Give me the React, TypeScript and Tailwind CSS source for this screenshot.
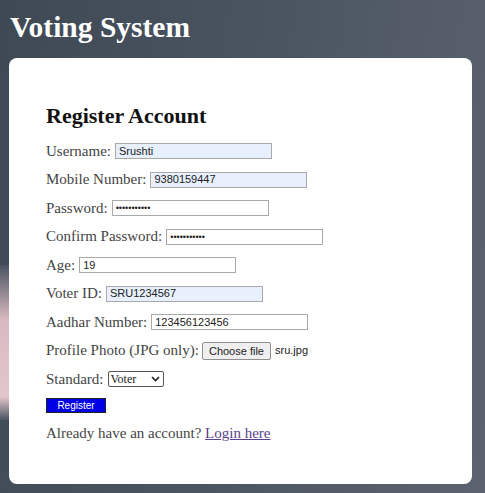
import React from 'react';

const serif = "font-['Liberation_Serif','Times_New_Roman',serif]";
const sans = "font-['Liberation_Sans',Arial,sans-serif]";

const Field = ({ label, value, type = 'text', filled = false }: { label: string; value: string; type?: string; filled?: boolean }) => (
  <div className="flex items-center h-[18px]">
    <span className="mr-[4px]">{label}</span>
    <input
      type={type}
      defaultValue={value}
      className={`h-[16px] w-[157px] border border-[#a9a9a9] px-[3px] text-[#222] ${sans} ${type === 'password' ? 'text-[9px]' : 'text-[11px]'} ${filled ? 'bg-[#e8f0fe]' : 'bg-white'}`}
    />
  </div>
);

export default function App() {
  return (
    <div className="relative h-[493px] w-[485px] overflow-hidden bg-[linear-gradient(100deg,#3e4954_0%,#4b5561_50%,#5c6370_100%)]">
      <div className="absolute left-0 top-[265px] h-[155px] w-[12px] bg-[linear-gradient(180deg,#4a5561_0%,#d8b9c0_35%,#e3c6cc_85%,#4a5561_100%)]" />
      <div className={`relative pl-[10px] pt-[11px] h-[58px] ${serif}`}>
        <h1 className="text-[29.5px] font-bold leading-[32px] text-white">Voting System</h1>
      </div>
      <div className={`relative mx-[9px] w-[463px] h-[426px] rounded-[8px] bg-white pl-[37px] pt-[45px] text-[15px] text-[#444] ${serif}`}>
        <h2 className="text-[22px] font-bold leading-[26px] text-[#111] mb-[13px]">Register Account</h2>
        <div className="flex flex-col gap-[10.5px]">
          <Field label="Username:" value="Srushti" filled />
          <Field label="Mobile Number:" value="9380159447" filled />
          <Field label="Password:" value="passwordxx1" type="password" />
          <Field label="Confirm Password:" value="passwordxx1" type="password" />
          <Field label="Age:" value="19" />
          <Field label="Voter ID:" value="SRU1234567" filled />
          <Field label="Aadhar Number:" value="123456123456" />
          <div className="flex items-center h-[18px]">
            <span className="mr-[3px]">Profile Photo (JPG only):</span>
            <span className={`h-[18px] border border-[#8f8f8f] bg-[#efefef] px-[6px] text-[11px] leading-[16px] text-[#222] rounded-[2px] ${sans}`}>Choose file</span>
            <span className={`ml-[4px] text-[11px] text-[#222] ${sans}`}>sru.jpg</span>
          </div>
          <div className="flex items-center h-[18px]">
            <span className="mr-[4px]">Standard:</span>
            <div className="flex items-center h-[16px] w-[56px] border-[1.5px] border-[#555] rounded-[2px] pl-[2px] pr-[3px] text-[12px] text-[#222] justify-between">
              <span>Voter</span>
              <svg width="9" height="6" viewBox="0 0 9 6"><path d="M1 1 L4.5 4.5 L8 1" fill="none" stroke="#222" strokeWidth="1.6" /></svg>
            </div>
          </div>
        </div>
        <button className={`mt-[10px] h-[15px] w-[60px] bg-[#0000e6] border border-[#222] text-[10px] leading-[12px] text-white ${sans}`}>Register</button>
        <p className="mt-[9px] text-[15px] leading-[18px]">
          Already have an account? <a className="text-[#5b3f8f] underline">Login here</a>
        </p>
      </div>
    </div>
  );
}
